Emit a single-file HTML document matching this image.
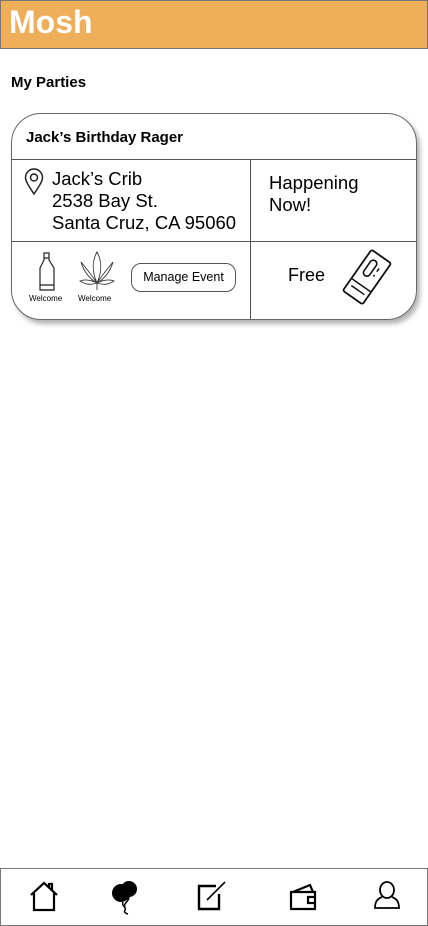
<!DOCTYPE html>
<html><head><style>
*{margin:0;padding:0;box-sizing:border-box}
body{width:428px;height:926px;background:#fff;font-family:"Liberation Sans",sans-serif;position:relative;overflow:hidden;color:#000}
.hdr{position:absolute;left:0;top:0;width:428px;height:49px;background:#efae5a;border:1px solid #777}
.hdr span{position:absolute;left:8px;top:3px;font-size:32px;font-weight:bold;color:#fff}
.t{position:absolute;font-size:15px;font-weight:bold;left:11px;top:74px}
.card{position:absolute;left:11px;top:113px;width:406px;height:207px;border:1px solid #666;border-radius:30px;box-shadow:3px 4px 5px rgba(0,0,0,.3);overflow:hidden}
.hl{position:absolute;left:0;width:406px;height:1px;background:#555}
.vl{position:absolute;left:238px;top:45px;width:1px;height:162px;background:#555}
.a{position:absolute}
.nav{position:absolute;left:0;top:868px;width:428px;height:58px;border:1px solid #777}
</style></head><body>
<div class="hdr"><span>Mosh</span></div>
<div class="t">My Parties</div>
<div class="card">
<div class="a" style="left:14px;top:15px;font-size:15px;font-weight:bold">Jack’s Birthday Rager</div>
<div class="hl" style="top:45px"></div>
<div class="hl" style="top:127px"></div>
<div class="vl"></div>
<svg class="a" style="left:12px;top:54px" width="20" height="28" viewBox="0 0 20 28"><path d="M10 26C4 17 1.5 13 1.5 9.5a8.5 8.5 0 0117 0C18.5 13 16 17 10 26z" fill="none" stroke="#222" stroke-width="1.5"/><circle cx="10" cy="9.5" r="3.5" fill="none" stroke="#222" stroke-width="1.5"/></svg>
<div class="a" style="left:40px;top:54px;font-size:18.5px;line-height:22px">Jack’s Crib<br>2538 Bay St.<br>Santa Cruz, CA 95060</div>
<div class="a" style="left:257px;top:58px;font-size:18.5px;line-height:22px">Happening<br>Now!</div>
<svg class="a" style="left:25px;top:138px" width="20" height="40" viewBox="0 0 20 40"><path d="M7 1h5v7l5 8v22H3V16l4-8z M7 6h5 M3 33h14" fill="none" stroke="#222" stroke-width="1.2"/></svg>
<svg class="a" style="left:66px;top:136px" width="38" height="42" viewBox="0 0 38 42"><path d="M19 2C14 11 14 22 19 33C24 22 24 11 19 2z M19 33C13 24 7 17 3 12C6 22 12 29 19 33z M19 33C25 24 31 17 35 12C32 22 26 29 19 33z M19 33C13 30 7 29 2 31C8 35 13 35 19 33z M19 33C25 30 31 29 36 31C30 35 25 35 19 33z M19 33V40" fill="none" stroke="#333" stroke-width="0.9"/></svg>
<div class="a" style="left:17px;top:180px;font-size:8px">Welcome</div>
<div class="a" style="left:66px;top:180px;font-size:8px">Welcome</div>
<div class="a" style="left:119px;top:149px;width:105px;height:29px;border:1px solid #555;border-radius:10px;font-size:12.5px;text-align:center;line-height:27px">Manage Event</div>
<div class="a" style="left:276px;top:151px;font-size:18px">Free</div>
<svg class="a" style="left:330px;top:135px" width="50" height="56" viewBox="0 0 50 56"><g transform="rotate(35 25 28)"><rect x="13" y="3" width="24" height="50" rx="2" fill="none" stroke="#111" stroke-width="1.8"/><rect x="19" y="10" width="7" height="18" rx="3.5" fill="none" stroke="#111" stroke-width="1.6"/><path d="M13 38h24 M17 44h16 M30 14v4 M30 22v2" stroke="#111" stroke-width="1.5"/></g></svg>
</div>
<div class="nav">
<svg class="a" style="left:27px;top:11px" width="32" height="32" viewBox="0 0 32 32"><path d="M3 15L16 3l13 12 M6 13v17h20V13 M21 7V4h3v6" fill="none" stroke="#000" stroke-width="2.2"/></svg>
<svg class="a" style="left:108px;top:11px" width="30" height="36" viewBox="0 0 30 36"><circle cx="20" cy="9" r="8" fill="#000"/><circle cx="12" cy="13" r="9" fill="#000"/><path d="M14 22c-2 4 4 5 2 8s3 4 3 4 M20 17c0 5-6 6-4 10" fill="none" stroke="#000" stroke-width="1.5"/></svg>
<svg class="a" style="left:195px;top:11px" width="34" height="32" viewBox="0 0 34 32"><path d="M20 6H3v23h20V14" fill="none" stroke="#000" stroke-width="2.4"/><path d="M11 20L29 2" stroke="#000" stroke-width="1.6"/></svg>
<svg class="a" style="left:287px;top:13px" width="34" height="30" viewBox="0 0 34 30"><path d="M3 10h24v17H3z M5 10l17-7 3 7 M27 15h-7v6h7" fill="none" stroke="#000" stroke-width="2.2"/></svg>
<svg class="a" style="left:372px;top:11px" width="28" height="32" viewBox="0 0 28 32"><ellipse cx="14" cy="10" rx="7" ry="8" fill="none" stroke="#000" stroke-width="1.8"/><path d="M9 17c-5 2-7 5-7 11h24c0-6-2-9-7-11" fill="none" stroke="#000" stroke-width="1.8"/></svg>
</div>
</body></html>
